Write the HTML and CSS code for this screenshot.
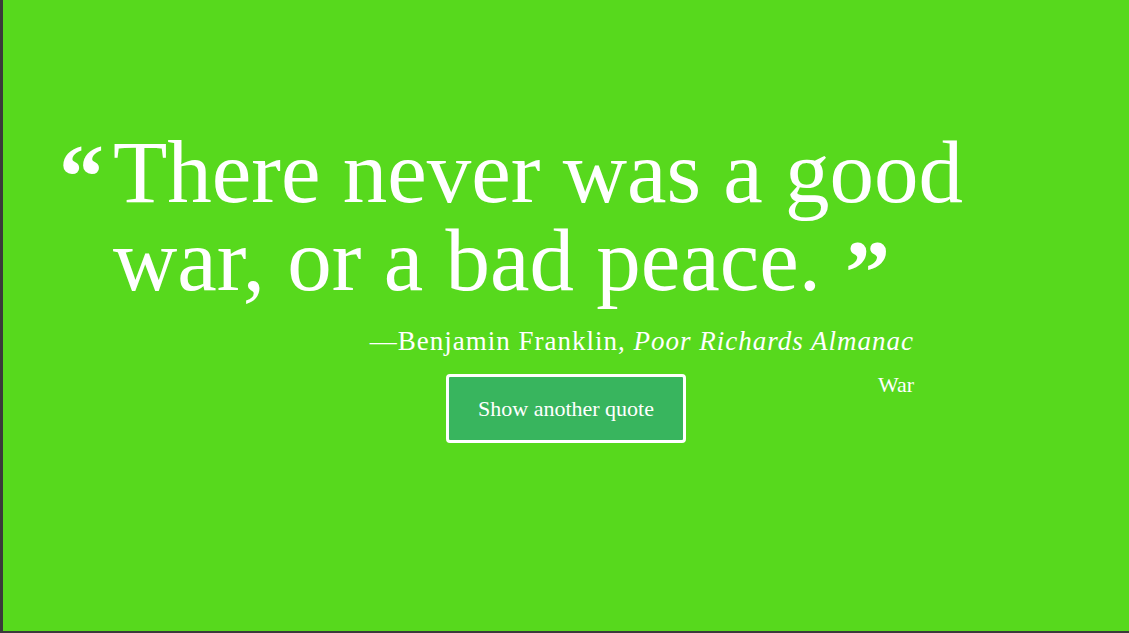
FILE: index.html
```html
<!DOCTYPE html>
<html lang="en">
<head>
<meta charset="utf-8">
<title>Random Quote</title>
<link rel="stylesheet" href="styles.css">
</head>
<body>
<main class="page">
  <blockquote class="quote">
    <span class="mark open">&ldquo;</span>
    <p class="text">There never was a good war, or a bad peace.<span class="mark close">&rdquo;</span></p>
  </blockquote>
  <p class="attrib">&mdash;Benjamin Franklin, <cite>Poor Richards Almanac</cite></p>
  <div class="actions">
    <span></span>
    <button class="btn">Show another quote</button>
    <span class="tag">War</span>
  </div>
</main>
</body>
</html>
```
FILE: styles.css
```css
html, body {
  margin: 0;
  padding: 0;
  height: 100%;
}
body {
  background: #3a3a3a;
  font-family: "Liberation Serif", "DejaVu Serif", serif;
  color: #fff;
}
.page {
  box-sizing: border-box;
  margin-left: 3px;
  height: 631px;
  background: #57d91d;
  padding-top: 128px;
  display: flex;
  flex-direction: column;
}
.quote {
  margin: 0 0 0 56px;
  display: flex;
  align-items: flex-start;
}
.mark {
  font-weight: bold;
  font-size: 90px;
  line-height: 1;
}
.mark.open {
  margin-top: 4px;
  width: 54px;
}
.mark.close {
  display: inline-block;
  margin-left: 24px;
  height: 40px;
  line-height: 0.9;
  vertical-align: top;
  transform: translateY(16px);
}
.text {
  margin: 0;
  font-size: 89px;
  line-height: 88px;
  width: 880px;
}
.attrib {
  margin: 22px 0 0 0;
  padding-right: 215px;
  text-align: right;
  font-size: 27px;
  letter-spacing: 1px;
}
.attrib cite {
  font-style: italic;
}
.actions {
  margin-top: 17px;
  display: grid;
  grid-template-columns: 1fr auto 1fr;
  align-items: start;
}
.btn {
  width: 240px;
  height: 69px;
  background: #38b55e;
  border: 3px solid #fff;
  border-radius: 4px;
  color: #fff;
  font-family: "Liberation Serif", serif;
  font-size: 22px;
}
.tag {
  justify-self: end;
  padding-right: 215px;
  font-size: 22px;
  margin-top: -2px;
}
```
